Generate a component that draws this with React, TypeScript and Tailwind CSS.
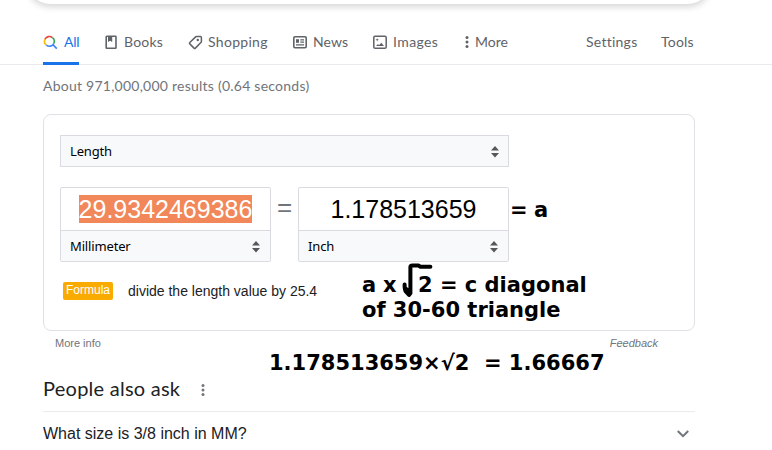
import type { ReactNode } from "react";

function Tab({ icon, label, box, text, active }: { icon: ReactNode; label: string; box: string; text: string; active?: boolean }) {
  return (
    <div className={`flex h-[45px] shrink-0 items-start pt-[12px] ${box}`}>
      <div className={`flex h-[33px] shrink-0 items-start ${active ? "border-b-[3px] border-[#1a73e8] text-[#1a73e8]" : ""}`}>
        <span className="mt-[3px] flex h-[15px]">{icon}</span>
        <span className={`whitespace-nowrap leading-[20px] ${text}`}>{label}</span>
      </div>
    </div>
  );
}

function SearchIcon() {
  return (
    <svg width="15" height="15" viewBox="0 0 15 15" fill="none" strokeWidth="1.6">
      <path d="M1.9 4.4A4.8 4.8 0 0 1 9.4 2.6" stroke="#ea4335" />
      <path d="M9.4 2.6A4.8 4.8 0 0 1 10.7 8.6" stroke="#34a853" />
      <path d="M1.9 4.4A4.8 4.8 0 0 0 3.4 10.2" stroke="#fbbc04" />
      <path d="M3.4 10.2A4.8 4.8 0 0 0 10.7 8.6M9.6 9.4L13.8 13.6" stroke="#4285f4" />
    </svg>
  );
}

function BooksIcon() {
  return (
    <svg width="12" height="15" viewBox="0 0 12 15" fill="none">
      <rect x="1.2" y="1.3" width="9.8" height="12" rx="0.6" stroke="#5f6368" strokeWidth="1.6" />
      <path d="M3 2h4.2v5.1L5.1 5.7 3 7.1z" fill="#5f6368" />
    </svg>
  );
}

function TagIcon() {
  return (
    <svg width="15" height="15" viewBox="0 0 15 15" fill="none">
      <path d="M8.4 1.5h4q1 0 1 1v4q0 .5-.3.8L7.4 13.1q-.7.7-1.4 0L1.8 8.9q-.7-.7 0-1.4L7.6 1.9q.3-.4.8-.4z" stroke="#5f6368" strokeWidth="1.5" />
      <circle cx="9.8" cy="5" r="1.2" fill="#5f6368" />
    </svg>
  );
}

function NewsIcon() {
  return (
    <svg width="14" height="15" viewBox="0 0 14 15" fill="none" stroke="#5f6368">
      <rect x=".8" y="1.8" width="12.4" height="11" rx="1.2" strokeWidth="1.6" />
      <path d="M3 4.2h3v3.6H3z" fill="#5f6368" stroke="none" />
      <path d="M7.3 4.9H11M7.3 7.2H11M3 9.9h8" strokeWidth="1.2" />
    </svg>
  );
}

function ImagesIcon() {
  return (
    <svg width="14" height="15" viewBox="0 0 14 15" fill="#5f6368">
      <rect x=".8" y="1.3" width="12.4" height="12" rx="1.3" fill="none" stroke="#5f6368" strokeWidth="1.5" />
      <path d="M3 11l1.8-1.8L6.2 10l2.2-2.3L11 11zM4.2 3.2l.5 1.1 1.1.5-1.1.5-.5 1.1-.5-1.1-1.1-.5 1.1-.5z" />
    </svg>
  );
}

function Dots({ color = "#5f6368" }: { color?: string }) {
  return (
    <svg width="4" height="14" viewBox="0 0 4 14" fill={color}>
      <circle cx="2" cy="2.5" r="1.5" />
      <circle cx="2" cy="7" r="1.5" />
      <circle cx="2" cy="11.5" r="1.5" />
    </svg>
  );
}

function Select({ label, text, pad }: { label: string; text: string; pad: string }) {
  return (
    <div className={`flex h-full items-center justify-between bg-[#f8f9fb] pt-[2px] pl-[9px] font-['Noto_Sans',sans-serif] text-[13px] text-black ${pad}`}>
      <span className={text}>{label}</span>
      <svg width="8" height="12" viewBox="0 0 8 12" fill="#55575a">
        <path d="M4 0L8 4.5H0zM4 11.5L0 7h8z" />
      </svg>
    </div>
  );
}

function UnitBox({ value, unit, unitText, selected, pad }: { value: string; unit: string; unitText: string; selected?: boolean; pad: string }) {
  return (
    <div className="flex h-[75px] w-[211px] flex-col rounded-[2px] border border-[#d9dbe0]">
      <div className="flex h-[43px] items-center justify-center border-b border-[#d9dbe0] text-[25px] leading-[28px]">
        <span className={selected ? "bg-[#f28759] text-white" : "text-black"}>{value}</span>
      </div>
      <div className="h-[30px]">
        <Select label={unit} text={unitText} pad={pad} />
      </div>
    </div>
  );
}

export default function App() {
  return (
    <div className="relative flex h-[450px] w-[772px] flex-col overflow-hidden bg-white font-['Liberation_Sans',Arial,sans-serif]">
      <div className="flex h-[20px] shrink-0 pl-[28px]">
        <div className="-mt-[40px] h-[44px] w-[682px] rounded-[22px] bg-white shadow-[0_2px_6px_1px_rgba(32,33,36,0.18)]" />
      </div>
      <div className="flex h-[45px] shrink-0 border-b border-[#e8eaed] pl-[43px] font-['Lato',sans-serif] text-[14px] text-[#5f6368]">
        <Tab active icon={<SearchIcon />} label="All" box="w-[62px]" text="ml-[6px] w-[15px] tracking-[-0.2px]" />
        <Tab icon={<BooksIcon />} label="Books" box="w-[83px]" text="ml-[7px] tracking-[0.2px]" />
        <Tab icon={<TagIcon />} label="Shopping" box="w-[105px]" text="ml-[5px] tracking-[0.3px]" />
        <Tab icon={<NewsIcon />} label="News" box="w-[80px]" text="ml-[6px] tracking-[0.1px]" />
        <Tab icon={<ImagesIcon />} label="Images" box="w-[92px]" text="ml-[6px] tracking-[0.4px]" />
        <Tab icon={<Dots />} label="More" box="w-[121px]" text="ml-[6px]" />
        <span className="w-[75px] pt-[12px] leading-[20px] tracking-[0.25px]">Settings</span>
        <span className="pt-[12px] leading-[20px] tracking-[0.2px]">Tools</span>
      </div>
      <div className="h-[49px] shrink-0 pt-[11px] pl-[43px] font-['Lato',sans-serif] text-[14px] leading-[20px] tracking-[0.24px] text-[#70757a]">
        About 971,000,000 results (0.64 seconds)
      </div>

      <main className="ml-[43px] flex w-[652px] flex-col">
        <section className="flex h-[217px] flex-col rounded-[8px] border border-[#dfe1e5] pt-[20px] pl-[16px]">
          <div className="h-[32px] w-[449px] border border-[#d9dbe0]">
            <Select label="Length" text="tracking-[-0.15px]" pad="pr-[9px]" />
          </div>
          <div className="mt-[20px] flex">
            <UnitBox value="29.9342469386" unit="Millimeter" unitText="tracking-[-0.15px]" selected pad="pr-[10px]" />
            <div className="w-[27px] pt-[6px] text-center text-[26px] leading-[28px] text-[#70757a]">=</div>
            <UnitBox value="1.178513659" unit="Inch" unitText="tracking-[-0.15px]" pad="pr-[10px]" />
          </div>
          <div className="mt-[20px] flex h-[18px] items-center pl-[3px]">
            <span className="h-[18px] w-[50px] rounded-[2px] bg-[#f9ab00] text-center text-[12px] leading-[17px] text-white">Formula</span>
            <span className="ml-[15px] text-[14px] leading-[18px] text-[#202124]">divide the length value by 25.4</span>
          </div>
        </section>
        <div className="flex h-[42px] justify-between pt-[5px] pr-[37px] pl-[12px] text-[11px] leading-[14px] text-[#70757a]">
          <span>More info</span>
          <span className="italic">Feedback</span>
        </div>
        <div className="flex h-[39px] border-b border-[#ebebeb] font-['Lato',sans-serif] text-[20px] leading-[31px] tracking-[0.25px] text-[#202124]">
          <span className="w-[158px]">People also ask</span>
          <span className="pt-[10px]"><Dots color="#70757a" /></span>
        </div>
        <div className="flex h-[38px] items-center justify-between pt-[6px] pr-[6px] text-[16px] text-[#202124]">
          <span>What size is 3/8 inch in MM?</span>
          <svg width="12" height="8" viewBox="0 0 12 8" fill="none" stroke="#70757a" strokeWidth="2">
            <path d="M.8 1L6 6.2 11.2 1" />
          </svg>
        </div>
      </main>

      {/* Handwritten-style notes laid over the converter */}
      <div className="whitespace-pre font-['DejaVu_Sans',sans-serif] text-[21px] leading-[25px] font-bold text-black">
        <div className="absolute top-[198px] left-[510px] tracking-[-0.4px]">= a</div>
        <div className="absolute top-[273px] left-[362px] tracking-[-0.3px]">a x</div>
        <div className="absolute top-[273px] left-[418px]">2 = c diagonal</div>
        <div className="absolute top-[298px] left-[362px]">of 30-60 triangle</div>
        <div className="absolute top-[351px] left-[269px]">1.178513659×√2  = 1.66667</div>
        <svg className="absolute top-[262px] left-[400px]" width="36" height="36" viewBox="0 0 36 36" fill="none" stroke="#000" strokeWidth="4" strokeLinecap="round" strokeLinejoin="round">
          <path d="M4.6 22.5q-.2 5 1.4 7.2L9 33l1.4-1.8V5q0-1.5 2-1.5h6l2 1.2h10M5 26l5 4" />
        </svg>
      </div>
    </div>
  );
}
